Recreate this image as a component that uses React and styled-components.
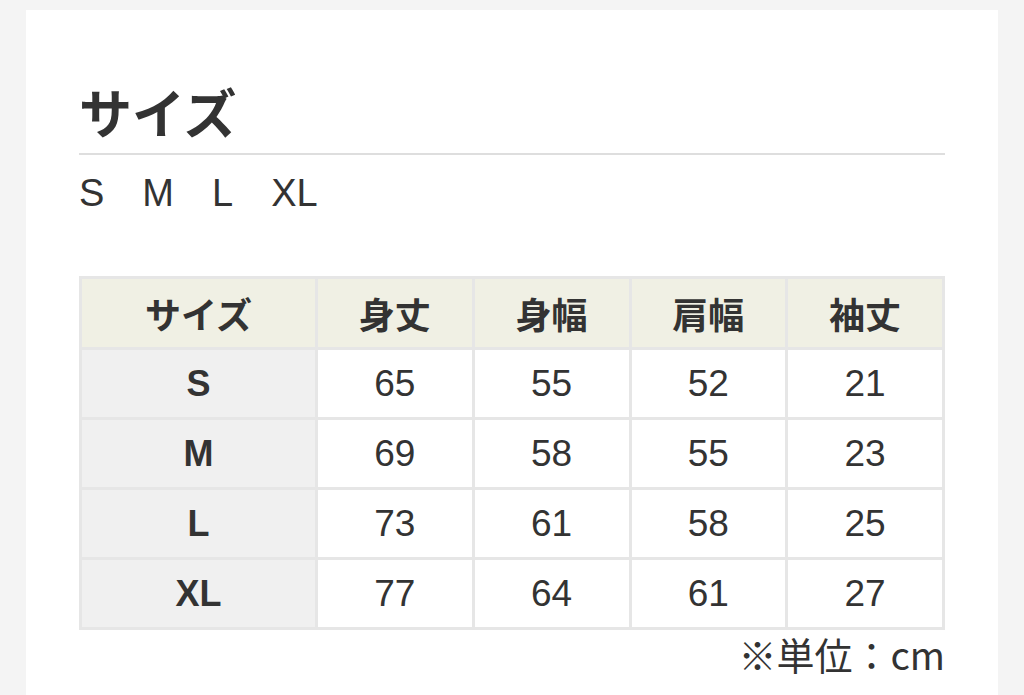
import React from "react";
import styled, { createGlobalStyle } from "styled-components";

const Global = createGlobalStyle`
  html, body { margin: 0; padding: 0; background: #f4f4f4; }
  body { font-family: "Noto Sans CJK JP", "Noto Sans", sans-serif; color: #333; }
`;

const Page = styled.div`
  height: 695px;
  overflow: hidden;
  padding: 10px 26px 0;
  box-sizing: border-box;
`;

const Card = styled.section`
  background: #fff;
  height: 100%;
  padding: 69px 53px 0;
  box-sizing: border-box;
`;

const Title = styled.h2`
  margin: 0;
  font-size: 53px;
  line-height: 64px;
  font-weight: 700;
  color: #333;
`;

const Divider = styled.hr`
  margin: 10px 0 0;
  border: 0;
  height: 2px;
  background: #dedede;
`;

const SizeList = styled.div`
  display: flex;
  gap: 38px;
  margin-top: 16px;
  font-family: "Liberation Sans", "Noto Sans", sans-serif;
  font-size: 38px;
  line-height: 44px;
  color: #333;
`;

const Table = styled.table`
  margin-top: 61px;
  width: 866px;
  border-collapse: collapse;
  table-layout: fixed;
  border: 3px solid #e6e6e6;
`;

const Th = styled.th`
  height: 68px;
  padding: 0;
  border: 3px solid #e6e6e6;
  background: #f0f0e4;
  font-size: 36px;
  font-weight: 700;
  color: #333;
  text-align: center;
  vertical-align: middle;
`;

const RowHead = styled.th`
  height: 67px;
  padding: 0;
  border: 3px solid #e6e6e6;
  background: #f0f0f0;
  font-family: "Liberation Sans", "Noto Sans", sans-serif;
  font-size: 36px;
  font-weight: 700;
  color: #333;
  text-align: center;
  vertical-align: middle;
`;

const Td = styled.td`
  height: 67px;
  padding: 0;
  border: 3px solid #e6e6e6;
  background: #fff;
  font-family: "Liberation Sans", "Noto Sans", sans-serif;
  font-size: 37px;
  color: #333;
  text-align: center;
  vertical-align: middle;
`;

const Note = styled.p`
  margin: 0;
  text-align: right;
  font-size: 38px;
  line-height: 48px;
  color: #333;
`;

const headers = ["サイズ", "身丈", "身幅", "肩幅", "袖丈"];
const rows = [
  ["S", 65, 55, 52, 21],
  ["M", 69, 58, 55, 23],
  ["L", 73, 61, 58, 25],
  ["XL", 77, 64, 61, 27],
];

export default function App() {
  return (
    <>
      <Global />
      <Page>
        <Card>
          <Title>サイズ</Title>
          <Divider />
          <SizeList>
            <span>S</span>
            <span>M</span>
            <span>L</span>
            <span>XL</span>
          </SizeList>
          <Table>
            <colgroup>
              <col style={{ width: 236 }} />
              <col />
              <col />
              <col />
              <col />
            </colgroup>
            <thead>
              <tr>
                {headers.map((h) => (
                  <Th key={h}>{h}</Th>
                ))}
              </tr>
            </thead>
            <tbody>
              {rows.map(([s, ...vals]) => (
                <tr key={s}>
                  <RowHead>{s}</RowHead>
                  {vals.map((v, i) => (
                    <Td key={i}>{v}</Td>
                  ))}
                </tr>
              ))}
            </tbody>
          </Table>
          <Note>※単位：cm</Note>
        </Card>
      </Page>
    </>
  );
}
